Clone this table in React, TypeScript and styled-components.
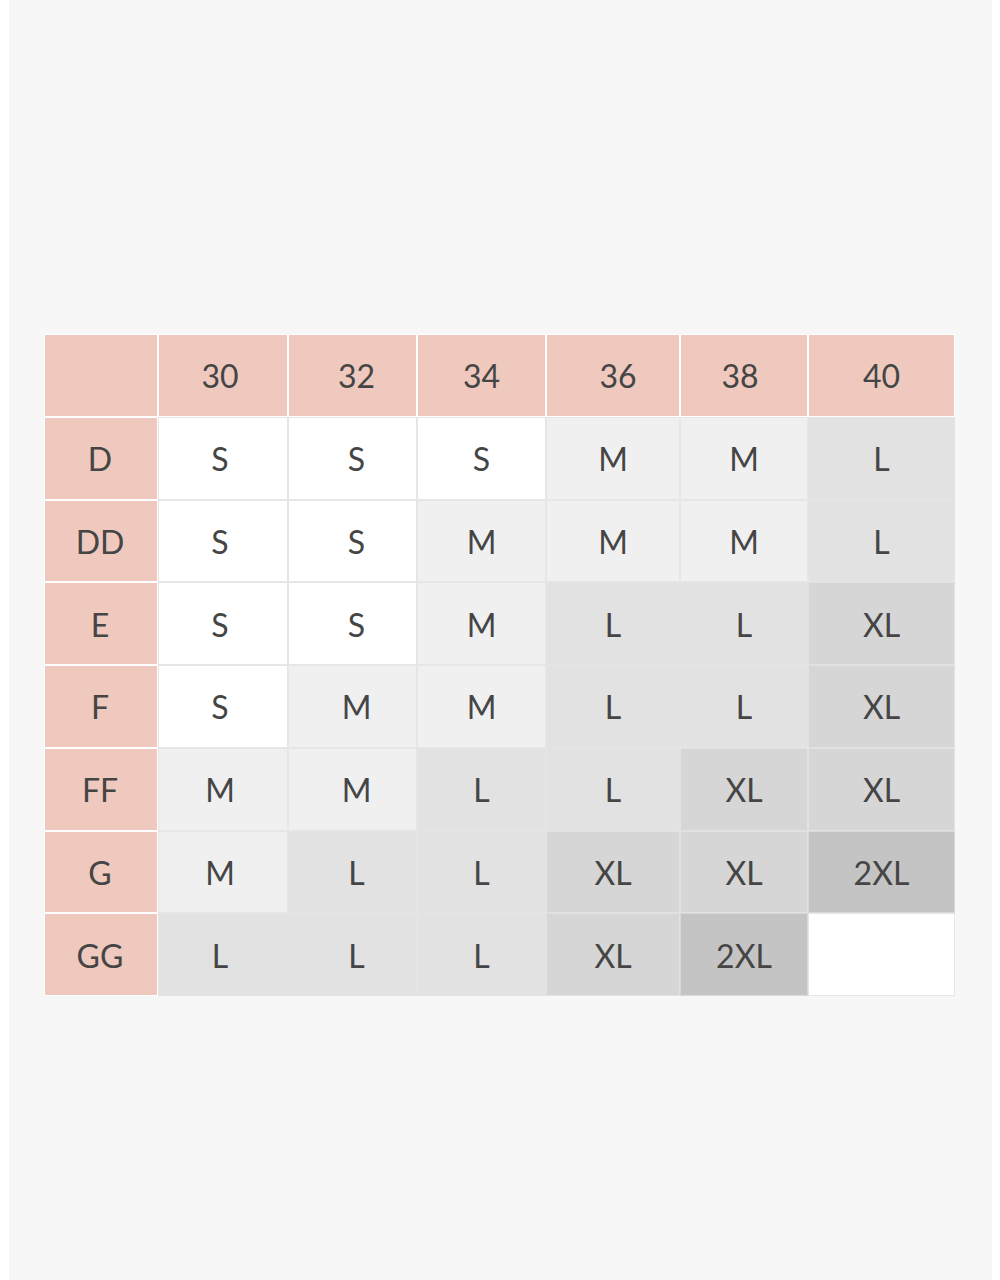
import React from "react";
import styled, { createGlobalStyle } from "styled-components";

const Global = createGlobalStyle`
  html, body { margin: 0; padding: 0; background: #ffffff; }
  body { font-family: "Lato", "Open Sans", sans-serif; }
`;

const Page = styled.div`
  padding-left: 9px;
  width: 1000px;
  box-sizing: border-box;
`;

const Panel = styled.div`
  width: 983px;
  height: 1280px;
  background: #f7f7f7;
  box-sizing: border-box;
  padding: 334px 0 0 35px;
`;

const Grid = styled.div`
  display: grid;
  grid-template-columns: 114px 130px 129px 129px 134px 128px 147px;
  grid-auto-rows: 82.75px;
`;

type Tone = "head" | "w" | "a" | "b" | "c" | "d";

const tones: Record<Tone, { bg: string; border: string }> = {
  head: { bg: "#efc9bd", border: "#ffffff" },
  w: { bg: "#ffffff", border: "#e6e6e6" },
  a: { bg: "#f0f0f0", border: "#e6e6e6" },
  b: { bg: "#e2e2e2", border: "#e4e4e4" },
  c: { bg: "#d6d6d6", border: "#e2e2e2" },
  d: { bg: "#c4c4c4", border: "#d8d8d8" },
};

const Cell = styled.div<{ $tone: Tone; $shift?: number }>`
  box-sizing: border-box;
  display: flex;
  align-items: center;
  justify-content: center;
  background: ${(p) => tones[p.$tone].bg};
  border: 1px solid ${(p) => tones[p.$tone].border};
  color: #454545;
  font-family: "Lato", "Open Sans", sans-serif;
  font-size: 32px;
  font-weight: 400;
  line-height: 1;
  padding-top: 2px;
  padding-left: ${(p) => Math.max(0, (p.$shift ?? 0) * 2)}px;
  padding-right: ${(p) => Math.max(0, -(p.$shift ?? 0) * 2)}px;
`;

const bands = ["30", "32", "34", "36", "38", "40"];
const headShift = [-3, 4, 0, 5, -4, 0];
const bodyShift = [-3, 4, 0, 0, 0, 0];

const rows: { cup: string; cells: [string, Tone][] }[] = [
  { cup: "D", cells: [["S", "w"], ["S", "w"], ["S", "w"], ["M", "a"], ["M", "a"], ["L", "b"]] },
  { cup: "DD", cells: [["S", "w"], ["S", "w"], ["M", "a"], ["M", "a"], ["M", "a"], ["L", "b"]] },
  { cup: "E", cells: [["S", "w"], ["S", "w"], ["M", "a"], ["L", "b"], ["L", "b"], ["XL", "c"]] },
  { cup: "F", cells: [["S", "w"], ["M", "a"], ["M", "a"], ["L", "b"], ["L", "b"], ["XL", "c"]] },
  { cup: "FF", cells: [["M", "a"], ["M", "a"], ["L", "b"], ["L", "b"], ["XL", "c"], ["XL", "c"]] },
  { cup: "G", cells: [["M", "a"], ["L", "b"], ["L", "b"], ["XL", "c"], ["XL", "c"], ["2XL", "d"]] },
  { cup: "GG", cells: [["L", "b"], ["L", "b"], ["L", "b"], ["XL", "c"], ["2XL", "d"], ["", "w"]] },
];

export default function App() {
  return (
    <>
      <Global />
      <Page>
        <Panel>
          <Grid>
            <Cell $tone="head" />
            {bands.map((b, i) => (
              <Cell key={b} $tone="head" $shift={headShift[i]}>{b}</Cell>
            ))}
            {rows.map((r) => (
              <React.Fragment key={r.cup}>
                <Cell $tone="head" $shift={-1}>{r.cup}</Cell>
                {r.cells.map(([t, tone], i) => (
                  <Cell key={i} $tone={tone} $shift={bodyShift[i]}>{t}</Cell>
                ))}
              </React.Fragment>
            ))}
          </Grid>
        </Panel>
      </Page>
    </>
  );
}
